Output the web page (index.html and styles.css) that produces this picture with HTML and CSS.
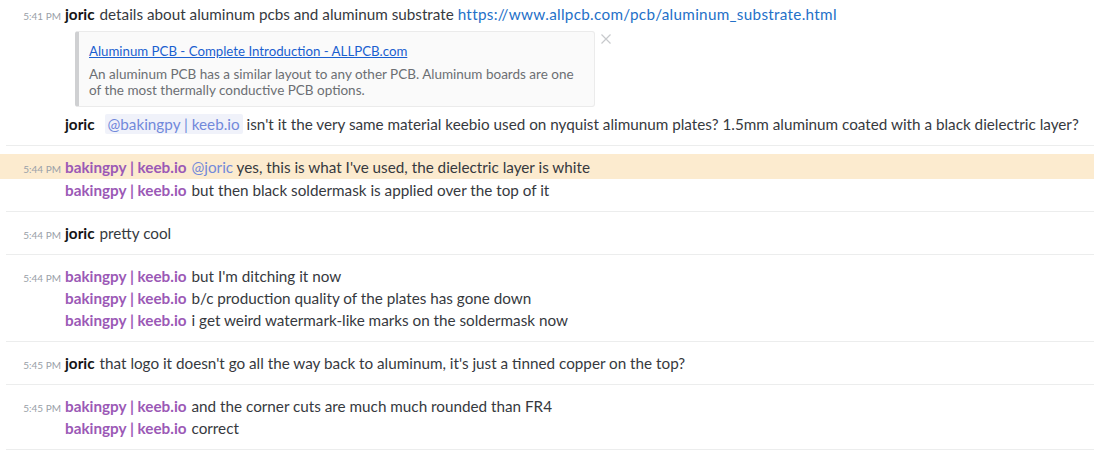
FILE: index.html
```html
<!DOCTYPE html>
<html lang="en">
<head>
<meta charset="UTF-8">
<title>Chat log</title>
<link rel="stylesheet" href="styles.css">
</head>
<body>
<div class="chat">
  <div class="group first">
    <div class="msg">
      <span class="time">5:41 PM</span>
      <span class="user">joric</span>
      <span class="text">details about aluminum pcbs and aluminum substrate <a class="link" href="#">https://www.allpcb.com/pcb/aluminum_substrate.html</a></span>
    </div>
    <div class="embed-row">
      <div class="embed">
        <a class="embed-title" href="#">Aluminum PCB - Complete Introduction - ALLPCB.com</a>
        <div class="embed-desc">An aluminum PCB has a similar layout to any other PCB. Aluminum boards are one of the most thermally conductive PCB options.</div>
      </div>
      <svg class="close" width="10" height="10" viewBox="0 0 10 10"><path d="M0.5 0.5L9.5 9.5M9.5 0.5L0.5 9.5" stroke="#c7c9cc" stroke-width="1.2" fill="none"/></svg>
    </div>
    <div class="msg">
      <span class="time"></span>
      <span class="user">joric</span>
      <span class="text"><span class="mention wide">@bakingpy | keeb.io</span> isn't it the very same material keebio used on nyquist alimunum plates? 1.5mm aluminum coated with a black dielectric layer?</span>
    </div>
  </div>

  <div class="group">
    <div class="msg mentioned">
      <span class="time">5:44 PM</span>
      <span class="user purple">bakingpy | keeb.io</span>
      <span class="text"><span class="mention">@joric</span> yes, this is what I've used, the dielectric layer is white</span>
    </div>
    <div class="msg">
      <span class="time"></span>
      <span class="user purple">bakingpy | keeb.io</span>
      <span class="text">but then black soldermask is applied over the top of it</span>
    </div>
  </div>

  <div class="group">
    <div class="msg">
      <span class="time">5:44 PM</span>
      <span class="user">joric</span>
      <span class="text">pretty cool</span>
    </div>
  </div>

  <div class="group">
    <div class="msg">
      <span class="time">5:44 PM</span>
      <span class="user purple">bakingpy | keeb.io</span>
      <span class="text">but I'm ditching it now</span>
    </div>
    <div class="msg">
      <span class="time"></span>
      <span class="user purple">bakingpy | keeb.io</span>
      <span class="text">b/c production quality of the plates has gone down</span>
    </div>
    <div class="msg">
      <span class="time"></span>
      <span class="user purple">bakingpy | keeb.io</span>
      <span class="text">i get weird watermark-like marks on the soldermask now</span>
    </div>
  </div>

  <div class="group">
    <div class="msg">
      <span class="time">5:45 PM</span>
      <span class="user">joric</span>
      <span class="text">that logo it doesn't go all the way back to aluminum, it's just a tinned copper on the top?</span>
    </div>
  </div>

  <div class="group">
    <div class="msg">
      <span class="time">5:45 PM</span>
      <span class="user purple">bakingpy | keeb.io</span>
      <span class="text">and the corner cuts are much much rounded than FR4</span>
    </div>
    <div class="msg">
      <span class="time"></span>
      <span class="user purple">bakingpy | keeb.io</span>
      <span class="text">correct</span>
    </div>
  </div>
</div>
</body>
</html>
```

FILE: styles.css
```css
body { margin: 0; background: #fff; font-family: Lato, "Open Sans", sans-serif; color: #3a3d42; }
.chat { display: flex; flex-direction: column; }
.group { padding: 10px 0; border-bottom: 1px solid #eceded; margin-left: 6px; }
.group.first { padding-top: 3px; }
.msg { display: flex; align-items: baseline; height: 22px; line-height: 22px; font-size: 15.25px; white-space: nowrap; margin-left: -6px; }
.msg.mentioned { background: #fcebcf; margin-top: -2px; padding: 2px 0 1px; }
.time { width: 61px; flex-shrink: 0; text-align: right; font-size: 10px; color: #99a0a8; margin-right: 4px; }
.user { font-weight: 700; color: #141414; margin-right: 5px; }
.user.purple { color: #9b59b6; }
.text { color: #36393e; }
.link { color: #2470c8; text-decoration: none; letter-spacing: 0.3px; }
.mention { color: #7289da; background: #f0f2fa; padding: 1px 3px; border-radius: 2px; }
.mention.wide { margin-left: 5px; }
.msg.mentioned .mention { background: none; padding: 0; }
.embed-row { display: flex; align-items: flex-start; margin: 6px 0 6px 69px; }
.embed { width: 495px; background: #fafafa; border: 1px solid #ebebeb; border-left: 4px solid #cfd0d2; border-radius: 3px; padding: 9px 10px 8px 10px; }
.embed-title { display: block; font-size: 13.25px; line-height: 20px; color: #1a5fd0; text-decoration: underline; }
.embed-desc { margin-top: 5px; font-size: 13.5px; line-height: 16px; color: #6c6f73; white-space: normal; }
.close { margin: 3px 0 0 6px; }
```
